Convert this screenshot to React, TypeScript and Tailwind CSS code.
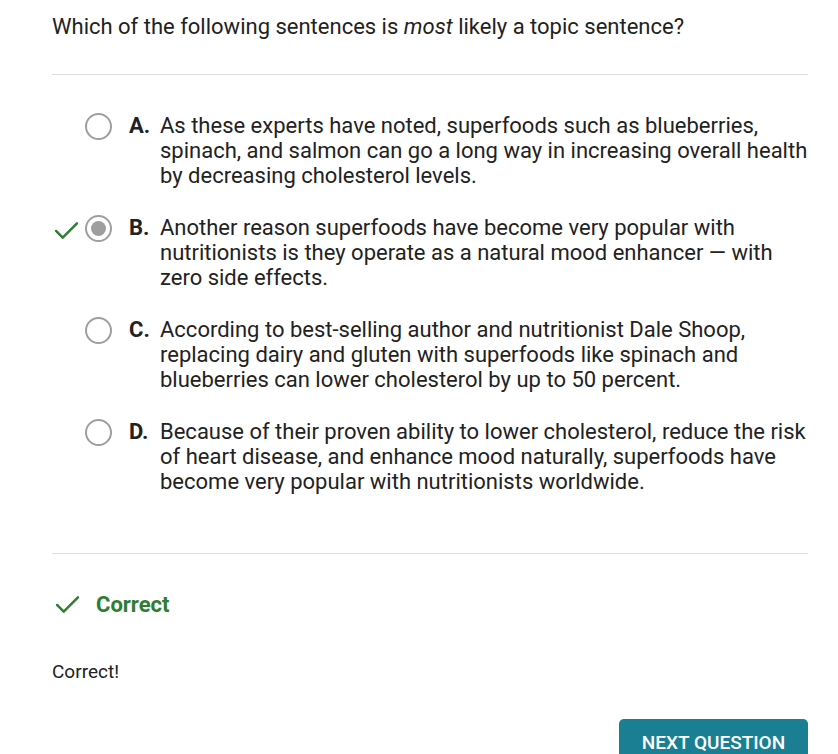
import React from 'react';

const options = [
  {
    letter: 'A.',
    text: 'As these experts have noted, superfoods such as blueberries, spinach, and salmon can go a long way in increasing overall health by decreasing cholesterol levels.',
  },
  {
    letter: 'B.',
    text: 'Another reason superfoods have become very popular with nutritionists is they operate as a natural mood enhancer — with zero side effects.',
    selected: true,
  },
  {
    letter: 'C.',
    text: 'According to best-selling author and nutritionist Dale Shoop, replacing dairy and gluten with superfoods like spinach and blueberries can lower cholesterol by up to 50 percent.',
  },
  {
    letter: 'D.',
    text: 'Because of their proven ability to lower cholesterol, reduce the risk of heart disease, and enhance mood naturally, superfoods have become very popular with nutritionists worldwide.',
  },
];

const Check: React.FC<{ className?: string }> = ({ className }) => (
  <svg viewBox="0 0 26 20" className={className} fill="none">
    <path d="M2 10.5 L9 17.5 L24 2.5" stroke="#2e7d32" strokeWidth="2.6" strokeLinecap="round" strokeLinejoin="round" />
  </svg>
);

const App: React.FC = () => {
  return (
    <div className="relative min-h-[754px] bg-white text-[#222] font-['Roboto',sans-serif] overflow-hidden">
      <div className="ml-[52px] w-[756px]">
        <h2 className="pt-[14px] pb-[34px] text-[22px] leading-[26px]">
          Which of the following sentences is <i>most</i> likely a topic sentence?
        </h2>
        <div className="h-px bg-[#dedede]" />

        <div className="flex flex-col gap-[27px] pt-[38px] pb-[59px]">
          {options.map((o) => (
            <div key={o.letter} className="flex items-start">
              <div className="w-[33px] h-[25px] shrink-0 flex items-center">
                {o.selected && <Check className="w-[25px] h-[19px] mt-[5px] ml-[2px]" />}
              </div>
              <div className="w-[27px] h-[27px] rounded-full border-2 border-[#9e9e9e] flex items-center justify-center shrink-0">
                {o.selected && <div className="w-[15px] h-[15px] rounded-full bg-[#9e9e9e]" />}
              </div>
              <div className="flex ml-[17px] text-[22px] leading-[25px]">
                <span className="font-bold w-[31px] shrink-0">{o.letter}</span>
                <span>{o.text}</span>
              </div>
            </div>
          ))}
        </div>

        <div className="h-px bg-[#dedede]" />

        <div className="flex items-center pt-[38px]">
          <Check className="w-[25px] h-[19px] ml-[3px]" />
          <span className="ml-[16px] text-[22px] leading-[25px] font-bold text-[#2e7d32]">Correct</span>
        </div>

        <p className="pt-[42px] text-[19px] leading-[25px]">Correct!</p>

        <div className="flex justify-end pt-[35px]">
          <button className="h-[48px] w-[189px] rounded-[5px] bg-[#1a7f93] text-white text-[19px] font-medium">
            NEXT QUESTION
          </button>
        </div>
      </div>

      <div className="absolute left-0 right-0 bottom-0 h-[7px] bg-gradient-to-b from-[#fafafa] to-[#ececec]" />
    </div>
  );
};

export default App;
